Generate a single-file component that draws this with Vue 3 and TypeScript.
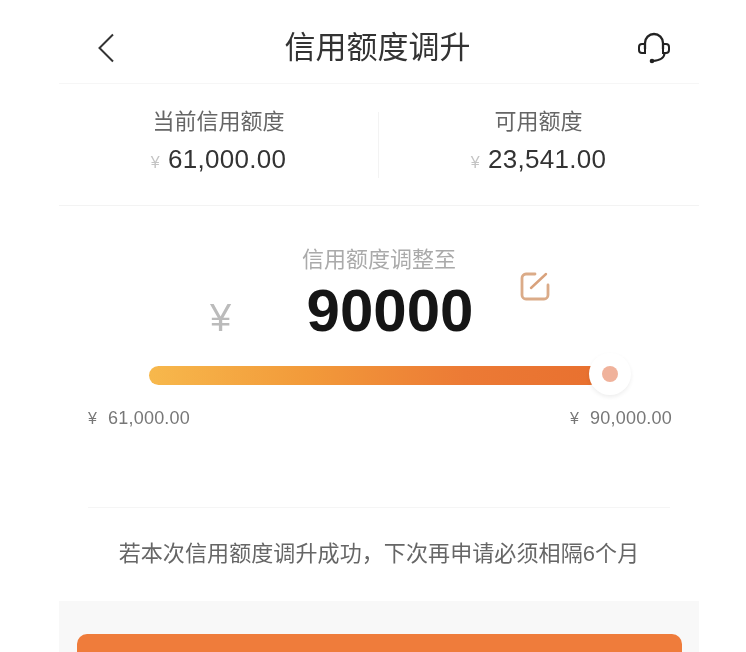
<script setup lang="ts">
import { ref } from 'vue';

const stats = ref([
  { label: '当前信用额度', value: '61,000.00' },
  { label: '可用额度', value: '23,541.00' },
]);
const amount = ref('90000');
const minLabel = ref('61,000.00');
const maxLabel = ref('90,000.00');
const notice = ref('若本次信用额度调升成功\uFF0C下次再申请必须相隔6个月');
</script>

<template>
  <div class="page">
    <header class="nav">
      <svg class="back" width="18" height="30" viewBox="0 0 18 30" fill="none">
        <path d="M16 1.500 2.500 15 16 28.500" stroke="#333" stroke-width="2" />
      </svg>
      <h1 class="title">信用额度调升</h1>
      <svg class="service" width="36" height="32" viewBox="0 0 36 32" fill="none">
        <path d="M9 17V11a9 9 0 0 1 18 0v6" stroke="#222" stroke-width="2.300" />
        <path d="M9 12H6a3 3 0 0 0-3 3v3a3 3 0 0 0 3 3h3z" stroke="#222" stroke-width="2" />
        <path d="M27 12h3a3 3 0 0 1 3 3v3a3 3 0 0 1-3 3h-3z" stroke="#222" stroke-width="2" />
        <path d="M28.500 21c0 5-4.500 7.500-12 8" stroke="#222" stroke-width="2" />
        <circle cx="16" cy="29" r="2.300" fill="#222" />
      </svg>
    </header>

    <section class="stats">
      <div v-for="item in stats" :key="item.label" class="stat">
        <div class="stat-label">{{ item.label }}</div>
        <div class="stat-value"><span class="stat-yen">¥</span>{{ item.value }}</div>
      </div>
    </section>

    <section class="adjust">
      <div class="adjust-label">信用额度调整至</div>
      <div class="amount-row">
        <span class="amount-yen">¥</span>
        <span class="amount">{{ amount }}</span>
        <svg class="edit" width="30" height="30" viewBox="0 0 30 30" fill="none">
          <path d="M15 2H6a4 4 0 0 0-4 4v17a4 4 0 0 0 4 4h18a4 4 0 0 0 4-4V13" stroke="#dbab88" stroke-width="2.800" stroke-linecap="round" />
          <path d="M11 16 26 2" stroke="#d9a27c" stroke-width="2.400" stroke-linecap="round" />
        </svg>
      </div>
      <div class="slider">
        <div class="track"></div>
        <div class="knob"><span class="knob-dot"></span></div>
      </div>
      <div class="range">
        <span><span class="range-yen">¥</span>{{ minLabel }}</span>
        <span><span class="range-yen">¥</span>{{ maxLabel }}</span>
      </div>
    </section>

    <p class="notice">{{ notice }}</p>

    <footer class="footer">
      <button class="submit" type="button"></button>
    </footer>
  </div>
</template>

<style>
html,
body {
  background: #fff;
  overflow: hidden;
}
</style>

<style scoped>
.page {
  width: 640px;
  height: 652px;
  margin-left: 59px;
  overflow: hidden;
  font-family: "Liberation Sans", Arial, "Noto Sans CJK SC", sans-serif;
  filter: blur(0.5px);
}

.nav {
  display: flex;
  align-items: center;
  justify-content: space-between;
  height: 84px;
  padding: 10px 27px 0 38px;
  box-sizing: border-box;
  border-bottom: 1px solid #f6f6f6;
}

.title {
  margin: -4px 0 0;
  font-size: 31px;
  font-weight: 400;
  color: #333;
  transform: translateX(2px);
}

.service {
  margin-top: 2px;
}

.back {
  margin-top: 3px;
}

.stats {
  position: relative;
  display: grid;
  grid-template-columns: 319px 321px;
  height: 122px;
  padding-top: 23px;
  box-sizing: border-box;
  border-bottom: 1px solid #f3f3f3;
}

.stats::after {
  content: "";
  position: absolute;
  left: 319px;
  top: 28px;
  width: 1px;
  height: 66px;
  background: #f3f3f3;
}

.stat {
  text-align: center;
}

.stat-label {
  font-size: 22px;
  line-height: 30px;
  color: #666;
}

.stat-value {
  margin-top: 7px;
  font-size: 26px;
  line-height: 30px;
  color: #333;
  letter-spacing: 0.3px;
}

.stat-yen {
  margin-right: 8px;
  font-size: 16px;
  color: #c4c4c4;
}

.adjust {
  padding-top: 40px;
}

.adjust-label {
  font-size: 22px;
  line-height: 28px;
  color: #aaa;
  text-align: center;
}

.amount-row {
  position: relative;
  height: 63px;
  margin-top: 6px;
  text-align: center;
}

.amount {
  display: block;
  padding-left: 22px;
  font-size: 60px;
  line-height: 62px;
  font-weight: 700;
  color: #151515;
}

.amount-yen {
  position: absolute;
  left: 151px;
  top: 15px;
  font-size: 38px;
  line-height: 46px;
  color: #bbb;
}

.edit {
  position: absolute;
  left: 461px;
  top: -8px;
}

.slider {
  position: relative;
  height: 19px;
  margin: 23px 99px 0 90px;
}

.track {
  height: 100%;
  border-radius: 10px;
  background: linear-gradient(90deg, #f7b84c 0%, #f29a3a 35%, #ec7a35 70%, #e8702f 100%);
}

.knob {
  position: absolute;
  right: -31px;
  top: -13px;
  display: flex;
  align-items: center;
  justify-content: center;
  width: 42px;
  height: 42px;
  border-radius: 50%;
  background: #fff;
  box-shadow: 0 2px 4px rgba(0, 0, 0, 0.07);
}

.knob-dot {
  width: 16px;
  height: 16px;
  border-radius: 50%;
  background: #f0b29b;
}

.range {
  display: flex;
  justify-content: space-between;
  margin: 22px 27px 0 29px;
  font-size: 18px;
  line-height: 22px;
  color: #777;
  letter-spacing: 0.2px;
}

.range-yen {
  margin-right: 11px;
  font-size: 16px;
}

.notice {
  margin: 77px 29px 0;
  padding-top: 31px;
  border-top: 1px solid #f5f5f5;
  font-size: 22px;
  line-height: 30px;
  color: #666;
  letter-spacing: 0.1px;
  text-align: center;
  white-space: nowrap;
}

.footer {
  height: 100px;
  margin-top: 32px;
  padding: 33px 17px 0 18px;
  box-sizing: border-box;
  background: #f8f8f8;
}

.submit {
  display: block;
  width: 100%;
  height: 80px;
  border: none;
  border-radius: 10px;
  background: #ef7c3b;
}
</style>
